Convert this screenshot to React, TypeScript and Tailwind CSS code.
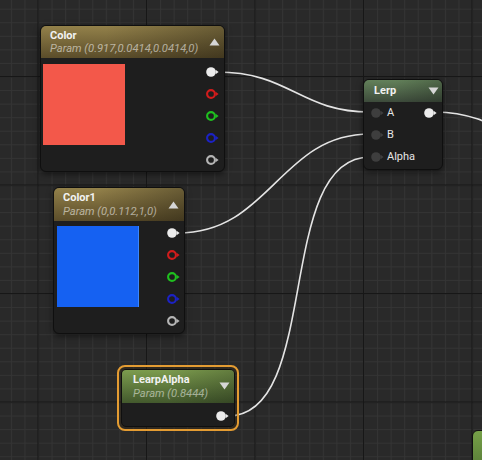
import React from "react";

const FONT = { fontFamily: "Roboto, 'Noto Sans', sans-serif" };

function Pin({ color, ring = false, bg = "#1e1e1e" }: { color: string; ring?: boolean; bg?: string }) {
  return (
    <svg width="14" height="12" viewBox="0 0 14 12" className="block">
      {ring ? (
        <circle cx="5" cy="6" r="3.9" fill={bg} stroke={color} strokeWidth="2.1" />
      ) : (
        <circle cx="5" cy="6" r="4.8" fill={color} />
      )}
      <polygon points="9.6,3.8 12.6,6 9.6,8.2" fill={color} />
    </svg>
  );
}

function Tri({ up }: { up: boolean }) {
  return (
    <svg width="11" height="8" viewBox="0 0 11 8" className="block">
      {up ? <polygon points="0.5,7.5 5.5,0.5 10.5,7.5" fill="#d6d6d6" /> : <polygon points="0.5,0.5 10.5,0.5 5.5,7.5" fill="#d6d6d6" />}
    </svg>
  );
}

const goldHeader =
  "bg-[linear-gradient(to_right,rgba(0,0,0,0)_35%,rgba(0,0,0,0.28)),linear-gradient(to_bottom,#93814a,#5b4d2a)]";
const greenHeader =
  "bg-[linear-gradient(to_right,rgba(0,0,0,0)_40%,rgba(0,0,0,0.2)),linear-gradient(to_bottom,#7c9c4e,#43592d)]";
const lerpHeader =
  "bg-[linear-gradient(to_right,rgba(0,0,0,0)_40%,rgba(0,0,0,0.2)),linear-gradient(to_bottom,#63815a,#3d4b3b)]";

function ColorRows({ pr, pt }: { pr: string; pt: string }) {
  return (
    <div className={`ml-auto flex flex-col ${pr} ${pt}`}>
      <div className="h-[22px] flex items-center"><Pin color="#ececec" /></div>
      <div className="h-[22px] flex items-center"><Pin color="#d11c1c" ring /></div>
      <div className="h-[22px] flex items-center"><Pin color="#1fbf1f" ring /></div>
      <div className="h-[22px] flex items-center"><Pin color="#1c22c4" ring /></div>
      <div className="h-[22px] flex items-center"><Pin color="#b4b4b4" ring /></div>
    </div>
  );
}

export default function App() {
  return (
    <div className="relative w-[482px] h-[460px] overflow-hidden bg-[#282828]" style={FONT}>
      <svg className="absolute inset-0" width="482" height="460">
        <defs>
          <pattern id="minor" x="10.875" y="8.69" width="13.5625" height="13.5625" patternUnits="userSpaceOnUse">
            <path d="M0 0.5H13.5625 M0.5 0V13.5625" stroke="#343434" strokeWidth="1" fill="none" />
          </pattern>
          <pattern id="major" x="37.5" y="76" width="108.5" height="108.5" patternUnits="userSpaceOnUse">
            <path d="M0 0.6H108.5 M0.6 0V108.5" stroke="#171717" strokeWidth="1.2" fill="none" />
          </pattern>
        </defs>
        <rect width="482" height="460" fill="#292929" />
        <rect width="482" height="460" fill="url(#minor)" />
        <rect width="482" height="460" fill="url(#major)" />
        <g fill="none" stroke="#e4e4e4" strokeWidth="1.6" strokeLinecap="round">
          <path d="M217 72 C 290 72, 300 112, 370 112" />
          <path d="M178 233 C 270 233, 280 134, 370 134" />
          <path d="M228 416 C 322 416, 274 157, 370 157" />
          <path d="M436 112 C 470 112, 492 124, 545 148" />
        </g>
      </svg>

      {/* Color node */}
      <div className="absolute left-[40px] top-[25px] w-[185px] h-[147px] rounded-[6px] border border-[#0f0f0f] bg-[#1e1e1e] shadow-[0_2px_6px_rgba(0,0,0,0.55)] flex flex-col overflow-hidden">
        <div className={`h-[32px] shrink-0 flex justify-between pl-[9px] pr-[4px] pt-[3px] ${goldHeader}`}>
          <div className="flex flex-col">
            <div className="text-[11px] leading-[14px] font-bold text-[#f2f2f2]">Color</div>
            <div className="text-[11.2px] leading-[12px] italic text-[rgba(255,255,255,0.55)] whitespace-nowrap">Param (0.917,0.0414,0.0414,0)</div>
          </div>
          <div className="self-center -mt-[4px]"><Tri up /></div>
        </div>
        <div className="flex flex-1">
          <div className="ml-[2px] mt-[6px] w-[82px] h-[81px] bg-[#f3584a]" />
          <ColorRows pr="pr-[4px]" pt="pt-[3px]" />
        </div>
      </div>

      {/* Color1 node */}
      <div className="absolute left-[53px] top-[187px] w-[132px] h-[147px] rounded-[6px] border border-[#0f0f0f] bg-[#1e1e1e] shadow-[0_2px_6px_rgba(0,0,0,0.55)] flex flex-col overflow-hidden">
        <div className={`h-[33px] shrink-0 flex justify-between pl-[9px] pr-[5px] pt-[3px] ${goldHeader}`}>
          <div className="flex flex-col">
            <div className="text-[11px] leading-[14px] font-bold text-[#f2f2f2]">Color1</div>
            <div className="text-[11.2px] leading-[13px] italic text-[rgba(255,255,255,0.55)] whitespace-nowrap">Param (0,0.112,1,0)</div>
          </div>
          <div className="self-center -mt-[2px]"><Tri up /></div>
        </div>
        <div className="flex flex-1">
          <div className="ml-[3px] mt-[5px] w-[82px] h-[81px] bg-[#1561f2] border-r border-[#3a86ff]" />
          <ColorRows pr="pr-[3px]" pt="pt-[1px]" />
        </div>
      </div>

      {/* LearpAlpha node (selected) */}
      <div className="absolute left-[117px] top-[365px] w-[122px] h-[66px] rounded-[8px] border-2 border-[#e49c32] p-[2px] bg-[#3a2a14]/40">
        <div className="w-full h-full rounded-[5px] border border-[#0f0f0f] bg-[#1e1e1e] flex flex-col overflow-hidden">
          <div className={`h-[33px] shrink-0 flex justify-between pl-[11px] pr-[4px] pt-[3px] ${greenHeader}`}>
            <div className="flex flex-col">
              <div className="text-[11px] leading-[14px] font-bold text-[#f2f2f2]">LearpAlpha</div>
              <div className="text-[11.2px] leading-[13px] italic text-[rgba(255,255,255,0.5)] whitespace-nowrap">Param (0.8444)</div>
            </div>
            <div className="self-center -mt-[4px]"><Tri up={false} /></div>
          </div>
          <div className="flex flex-1">
            <div className="ml-auto pr-[4px] pt-[2px]">
              <div className="h-[22px] flex items-center"><Pin color="#ececec" /></div>
            </div>
          </div>
        </div>
      </div>

      {/* Lerp node */}
      <div className="absolute left-[363px] top-[79px] w-[80px] h-[91px] rounded-[6px] border border-[#0f0f0f] bg-[#1e1e1e] shadow-[0_2px_6px_rgba(0,0,0,0.55)] flex flex-col overflow-hidden">
        <div className={`h-[22px] shrink-0 flex items-center justify-between pl-[10px] pr-[3px] ${lerpHeader}`}>
          <div className="text-[11px] leading-[14px] font-bold text-[#f2f2f2]">Lerp</div>
          <Tri up={false} />
        </div>
        <div className="flex flex-col pl-[7px] pr-[4px]">
          <div className="h-[22px] flex items-center">
            <Pin color="#3e3e3e" />
            <span className="ml-[2px] text-[11px] text-[#e6e6e6]">A</span>
            <div className="ml-auto"><Pin color="#ececec" /></div>
          </div>
          <div className="h-[22px] flex items-center">
            <Pin color="#3e3e3e" />
            <span className="ml-[2px] text-[11px] text-[#e6e6e6]">B</span>
          </div>
          <div className="h-[22px] flex items-center">
            <Pin color="#3e3e3e" />
            <span className="ml-[2px] text-[11px] text-[#e6e6e6]">Alpha</span>
          </div>
        </div>
      </div>

      {/* partial node bottom right */}
      <div className="absolute left-[472px] top-[430px] w-[40px] h-[50px] rounded-tl-[6px] border border-[#0f0f0f] bg-[linear-gradient(to_bottom,#76a048,#4f7232)]" />
    </div>
  );
}
